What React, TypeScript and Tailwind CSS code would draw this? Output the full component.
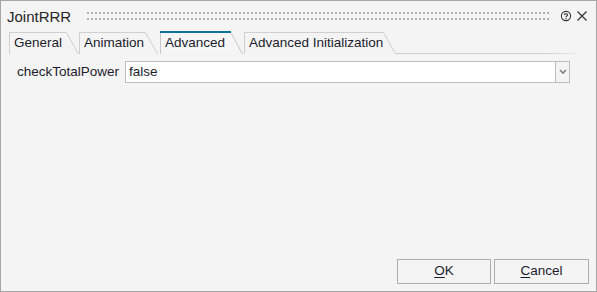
import React from "react";

const font = { fontFamily: '"Liberation Sans", Arial, sans-serif' };

function Tab({ label, width, active }: { label: string; width: number; active?: boolean }) {
  const h = 23;
  const slant = 12;
  return (
    <div className="relative h-[23px] shrink-0" style={{ width }}>
      <svg className="absolute inset-0" width={width} height={h}>
        {active ? (
          <>
            <path d={`M0.5 ${h} L0.5 1 L${width - slant - 0.5} 1 L${width - 0.5} ${h}`} fill="#f6f6f6" stroke="#c8c8c8" strokeWidth="1" />
            <rect x="0" y="0" width={width - slant} height="2" fill="#10709e" />
          </>
        ) : (
          <path d={`M0.5 ${h} L0.5 1.5 L${width - slant - 0.5} 1.5 L${width - 0.5} ${h}`} fill="none" stroke="#cfcfcf" strokeWidth="1" />
        )}
      </svg>
      <span className="relative block pl-[5px] pt-[4px] text-[13.5px] leading-[16px] text-[#1c1c2c] whitespace-nowrap">{label}</span>
    </div>
  );
}

export default function App() {
  return (
    <div className="w-[597px] h-[292px] border border-[#a6a6a6] bg-[#f4f4f4] flex flex-col" style={font}>
      {/* title bar */}
      <div className="flex items-center h-[30px] pl-[6px] pr-[8px]">
        <span className="text-[15px] text-[#262626] leading-[18px] pt-[2px]">JointRRR</span>
        <svg className="ml-[16px] w-[462px] h-[12px] shrink-0">
          <defs>
            <pattern id="dots" x="0" y="0" width="4" height="12" patternUnits="userSpaceOnUse">
              <rect x="0" y="2" width="2" height="2" fill="#b0b0b0" />
              <rect x="0" y="8" width="2" height="2" fill="#b0b0b0" />
            </pattern>
          </defs>
          <rect x="0" y="0" width="462" height="12" fill="url(#dots)" />
        </svg>
        <div className="flex-1" />
        <svg width="12" height="12" viewBox="0 0 12 12">
          <circle cx="6" cy="6" r="4.6" fill="none" stroke="#333" strokeWidth="1.1" />
          <path d="M4.4 4.9 C4.4 3.4 7.6 3.4 7.6 5 C7.6 6.1 6 6 6 7.2" fill="none" stroke="#333" strokeWidth="1.1" />
          <rect x="5.45" y="8" width="1.1" height="1.1" fill="#333" />
        </svg>
        <svg width="12" height="12" viewBox="0 0 12 12" className="ml-[4px]">
          <path d="M1.5 1.5 L10.5 10.5 M10.5 1.5 L1.5 10.5" stroke="#333" strokeWidth="1.2" />
        </svg>
      </div>

      {/* tabs */}
      <div className="flex items-end pl-[8px] pr-[12px]">
        <div className="flex items-end">
          <Tab label="General" width={70} />
          <Tab label="Animation" width={79} />
          <div className="w-[2px]" />
          <Tab label="Advanced" width={83} active />
          <div className="w-[1px]" />
          <Tab label="Advanced Initialization" width={152} />
        </div>
        <div className="flex-1 h-[1px] bg-[linear-gradient(to_right,#cfcfcf_80%,#f4f4f4)]" />
      </div>

      {/* content */}
      <div className="flex items-center pl-[16px] pr-[26px] mt-[7px]">
        <span className="text-[13.5px] text-[#1c1c2c] w-[108px] shrink-0">checkTotalPower</span>
        <div className="flex flex-1 h-[22px] border border-[#bdbdbd] bg-white">
          <span className="flex-1 pl-[3px] text-[13.5px] leading-[20px] text-[#1c1c2c]">false</span>
          <div className="w-[14px] border-l border-[#bdbdbd] bg-[#f4f4f4] flex items-center justify-center">
            <svg width="8" height="6" viewBox="0 0 8 6">
              <path d="M1 1 L4 4 L7 1" fill="none" stroke="#808080" strokeWidth="1.6" />
            </svg>
          </div>
        </div>
      </div>

      <div className="flex-1" />

      {/* buttons */}
      <div className="flex justify-end gap-[3px] pr-[7px] pb-[7px]">
        <button className="w-[94px] h-[25px] border border-[#adadad] bg-[#f4f4f4] text-[13.5px] text-[#1c1c2c]">
          <span className="underline underline-offset-2">O</span>K
        </button>
        <button className="w-[95px] h-[25px] border border-[#adadad] bg-[#f4f4f4] text-[13.5px] text-[#1c1c2c]">
          <span className="underline underline-offset-2">C</span>ancel
        </button>
      </div>
    </div>
  );
}
